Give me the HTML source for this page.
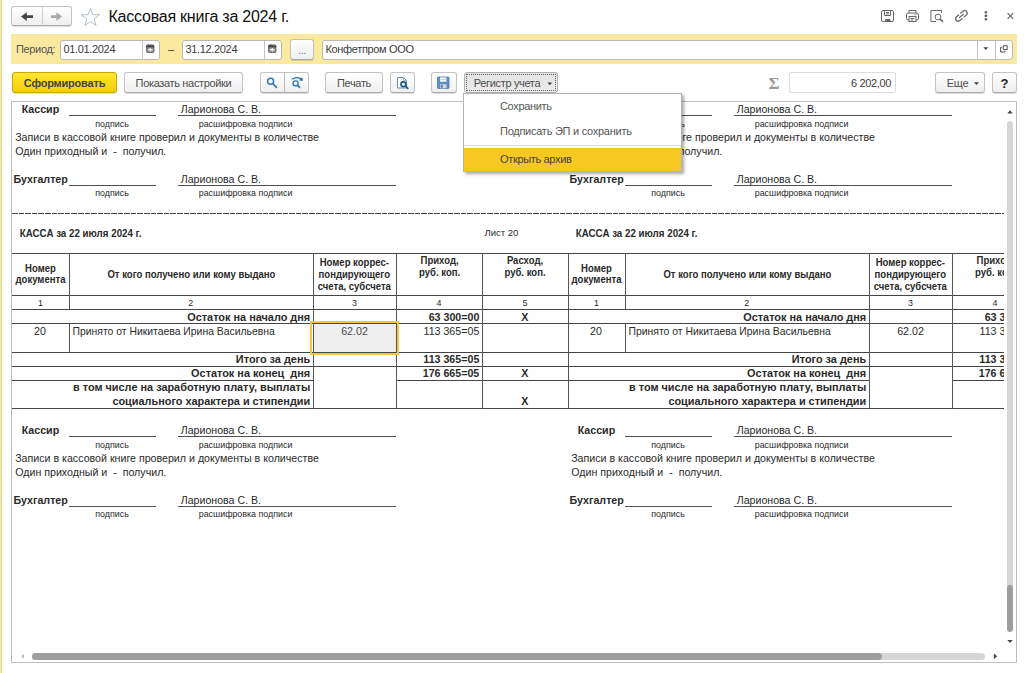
<!DOCTYPE html>
<html lang="ru"><head><meta charset="utf-8"><title>Кассовая книга за 2024 г.</title>
<style>
*{box-sizing:border-box;margin:0;padding:0}
html,body{width:1024px;height:673px;overflow:hidden;background:#fff}
body{position:relative;font-family:"Liberation Sans",Arial,sans-serif;font-size:11px;color:#333}
.abs{position:absolute}
.lstrip{left:0;top:0;width:1px;height:673px;background:#f4e591}
.lstrip2{left:1px;top:0;width:1px;height:673px;background:#e2d8aa}
.ui{font-size:11px;letter-spacing:-0.34px;white-space:nowrap}
.btn{position:absolute;height:21px;top:72px;border:1px solid #c3c3c3;border-bottom-color:#a9a9a9;border-radius:3px;background:linear-gradient(#ffffff,#efefef);box-shadow:0 1px 0 rgba(0,0,0,.12);text-align:center;line-height:21px;font-size:11px;letter-spacing:-0.34px;color:#4d4d4d;white-space:nowrap}
.inp{position:absolute;top:40px;height:20px;border:1px solid #b9b9b9;border-radius:3px;background:#fff;line-height:17px;font-size:11px;letter-spacing:-0.34px;color:#3c3c3c;padding-left:2.5px;white-space:nowrap}
.title{left:108.5px;top:5.7px;font-size:16px;letter-spacing:-0.23px;line-height:22px;color:#111;white-space:nowrap}
.ybar{left:11px;top:34px;width:1006px;height:30px;background:#fbe9a0}
/* document */
.panel{left:11px;top:101px;width:1006px;height:562px;border:1px solid #bdbdbd;background:#fff;overflow:hidden}
.view{position:absolute;left:0;top:0;width:992px;height:548px;overflow:hidden}
.pg{position:absolute;top:-102px;width:568px;height:673px;color:#2a2a2a}
.pg div{position:absolute;white-space:nowrap}
</style></head><body>
<div class="abs lstrip"></div><div class="abs lstrip2"></div>

<!-- header -->
<div class="btn" style="left:11px;top:6px;width:61px;height:20px"></div>
<div class="abs title">Кассовая книга за 2024 г.</div>

<div class="abs ybar"></div>
<div class="abs ui" style="left:16px;top:42px;line-height:14px;color:#555">Период:</div>
<div class="inp" style="left:60px;width:100px">01.01.2024</div>
<div class="abs ui" style="left:168px;top:42px;line-height:14px">–</div>
<div class="inp" style="left:182px;width:100px">31.12.2024</div>
<div class="btn" style="left:290px;top:39px;width:24px;height:21px;color:#777">...</div>
<div class="inp" style="left:322px;width:691px">Конфетпром ООО</div>

<!-- toolbar -->
<div class="btn" style="left:12px;width:105px;background:linear-gradient(#ffe630,#f5cf00);border-color:#c9a800;color:#444;font-weight:bold;letter-spacing:-0.2px">Сформировать</div>
<div class="btn" style="left:124px;width:119px">Показать настройки</div>
<div class="btn" style="left:260px;width:49px"></div>
<div class="btn" style="left:325px;width:58px">Печать</div>
<div class="btn" style="left:390px;width:25px"></div>
<div class="btn" style="left:431px;width:26px"></div>
<div class="btn" style="left:464px;width:94px;border-color:#b2b2b2;background:linear-gradient(#e2e2e2,#ececec);box-shadow:none"><span style="margin-right:8px">Регистр учета</span><div class="abs" style="left:1px;top:1px;width:90px;height:17px;border:1px dotted #666"></div></div>
<div class="abs" style="left:768.5px;top:73.5px;font-size:17px;line-height:20px;font-family:'Liberation Serif',serif;font-weight:bold;color:#9a9a9a">Σ</div>
<div class="inp" style="left:789px;top:72px;width:107px;height:21px;line-height:20px;border-color:#dcdcdc;border-radius:2px;text-align:right;padding-right:4px">6 202,00</div>
<div class="btn" style="left:935px;width:50px"><span style="margin-right:5px">Еще</span></div>
<div class="btn" style="left:992px;width:25px;color:#222;font-weight:bold;font-size:13px;letter-spacing:0">?</div>


<!-- icons layer -->
<svg class="abs" style="left:0;top:0" width="1024" height="100" viewBox="0 0 1024 100" fill="none">

 <!-- dividers -->
 <g stroke="#c4c4c4"><line x1="142.5" y1="41" x2="142.5" y2="59"/><line x1="264.5" y1="41" x2="264.5" y2="59"/><line x1="977.5" y1="41" x2="977.5" y2="59"/><line x1="995.5" y1="41" x2="995.5" y2="59"/><line x1="284.5" y1="73" x2="284.5" y2="93" stroke="#bcbcbc"/></g>
 <!-- back / forward -->
 <line x1="42.5" y1="7" x2="42.5" y2="26" stroke="#d0d0d0"/>
 <path d="M21 16.6 L26.8 12.3 L26.8 15.2 L33 15.2 L33 18.1 L26.8 18.1 L26.8 20.9 Z" fill="#444"/>
 <path d="M62.2 16.6 L56.4 12.3 L56.4 15.2 L51 15.2 L51 18.1 L56.4 18.1 L56.4 20.9 Z" fill="#aaa"/>
 <!-- star -->
 <path d="M90.4 8.2 L92.7 14.6 L99.5 14.8 L94.1 18.9 L96 25.4 L90.4 21.6 L84.8 25.4 L86.7 18.9 L81.3 14.8 L88.1 14.6 Z" stroke="#b5bdc7" stroke-width="1" stroke-linejoin="miter"/>
 <!-- calendars -->
 <g>
  <rect x="146.5" y="45" width="7.5" height="7.5" rx="1" fill="#8a8a8a" stroke="#5a5a5a" stroke-width=".8"/>
  <rect x="146.5" y="45" width="7.5" height="2.3" fill="#444"/>
  <rect x="147.8" y="44" width="1.3" height="1.8" fill="#777"/><rect x="151.2" y="44" width="1.6" height="1.8" fill="#999"/>
  <rect x="148" y="49" width="4.6" height="1.4" fill="#f4f4f4"/>
  <rect x="149.7" y="47.9" width="1.2" height="3.7" fill="#f4f4f4"/>
 </g>
 <g transform="translate(122 0)">
  <rect x="146.5" y="45" width="7.5" height="7.5" rx="1" fill="#8a8a8a" stroke="#5a5a5a" stroke-width=".8"/>
  <rect x="146.5" y="45" width="7.5" height="2.3" fill="#444"/>
  <rect x="147.8" y="44" width="1.3" height="1.8" fill="#777"/><rect x="151.2" y="44" width="1.6" height="1.8" fill="#999"/>
  <rect x="148" y="49" width="4.6" height="1.4" fill="#f4f4f4"/>
  <rect x="149.7" y="47.9" width="1.2" height="3.7" fill="#f4f4f4"/>
 </g>
 <!-- combobox arrow + open -->
 <path d="M983.3 47.3 L988.3 47.3 L985.8 50 Z" fill="#444"/>
 <path d="M1003.2 45.7 H1007.2 V49.5 H1003.2 Z" stroke="#555" stroke-width="1"/>
 <path d="M1002 47.6 H1000.6 V52 H1005 V50.6" stroke="#555" stroke-width="1"/>
 <!-- search buttons -->
 <circle cx="270.6" cy="81.3" r="3" stroke="#2e7ab3" stroke-width="1.5"/>
 <path d="M272.9 83.7 L276.4 87.3" stroke="#2e7ab3" stroke-width="1.7" stroke-linecap="round"/>
 <circle cx="295.6" cy="83.4" r="2.5" stroke="#2e7ab3" stroke-width="1.4"/>
 <path d="M297.5 85.4 L299.6 87.4" stroke="#2e7ab3" stroke-width="1.6" stroke-linecap="round"/>
 <path d="M291.8 79.3 Q296.5 76.2 301 78.8" stroke="#2473ad" stroke-width="1.3"/>
 <path d="M302.6 77.2 L302.6 81 L298.8 80.3 Z" fill="#1f6aa5"/>
 <!-- preview button icon -->
 <path d="M397.5 77.5 H403.5 L406.5 80.5 V88 H397.5 Z" fill="#fff" stroke="#6c8aa5" stroke-width="1"/>
 <path d="M403.5 77.5 V80.5 H406.5" stroke="#9aaec0" stroke-width=".8"/>
 <circle cx="403.4" cy="84.2" r="2.4" fill="#fff" stroke="#1d5b88" stroke-width="1.7"/>
 <path d="M405.4 86.2 L407.8 88.4" stroke="#1d5b88" stroke-width="1.8" stroke-linecap="round"/>
 <!-- save button icon (blue floppy) -->
 <rect x="437.5" y="77" width="11.5" height="11.5" rx=".8" fill="#5f8fca" stroke="#4a79b5" stroke-width=".8"/>
 <rect x="440" y="77.4" width="6.4" height="4.4" fill="#f2f5fa"/>
 <rect x="440.5" y="79" width="5.4" height=".7" fill="#b6c6dc"/>
 <rect x="440.3" y="84.3" width="6.2" height="4" fill="#d9d9d2"/>
 <rect x="441.2" y="85" width="1.5" height="2.8" fill="#4a6f9f"/>
 <!-- top right icons -->
 <g stroke="#6a6a6a" stroke-width="1">
  <rect x="881.5" y="10.5" width="12" height="11" rx="1.5"/>
  <path d="M884.5 10.5 V15.5 H890.5 V10.5 M886 12.5 H889 M886 14 H889"/>
  <path d="M885.5 21.5 V19.5 H890 V21.5" />
  <rect x="886.5" y="19.8" width="3" height="1.7" fill="#555" stroke="none"/>
  <!-- printer -->
  <path d="M909 13 V10.5 H916 V13"/>
  <rect x="906.5" y="13" width="12" height="7" rx="1.8"/>
  <rect x="909" y="16.5" width="7" height="5" fill="#fff"/>
  <path d="M910.5 18.5 H914.5 M910.5 20 H913"/>
  <path d="M914.5 14.7 H915.5 M916.5 14.7 H917.3" stroke-width="1"/>
  <!-- preview -->
  <path d="M941.5 13 V10.5 H930.9 V21.5 H936"/>
  <circle cx="938" cy="17" r="2.9"/>
  <path d="M940.2 19.2 L942.6 21.4" stroke-width="1.6" stroke-linecap="round"/>
  <!-- link -->
  <g transform="translate(961.4 15.9) rotate(-41)" stroke-width="1.3" stroke-linecap="round">
   <path d="M-1.4 -2.5 H-4.3 A2.5 2.5 0 0 0 -4.3 2.5 H-1.4"/>
   <path d="M1.4 -2.5 H4.3 A2.5 2.5 0 0 1 4.3 2.5 H1.4"/>
   <path d="M-2.5 0 H2.5"/>
  </g>
 </g>
 <g fill="#5a5a5a"><rect x="984.7" y="11.2" width="2.4" height="2.2"/><rect x="984.7" y="14.7" width="2.4" height="2.2"/><rect x="984.7" y="18.2" width="2.4" height="2.2"/></g>
 <path d="M1007.6 13.2 L1013.2 18.8 M1013.2 13.2 L1007.6 18.8" stroke="#666" stroke-width="1.1"/>
 <!-- button arrows -->
 <path d="M547.3 82.5 L552.3 82.5 L549.8 85.2 Z" fill="#444"/>
 <path d="M974 82.2 L979 82.2 L976.5 84.9 Z" fill="#444"/>
</svg>

<!-- document panel -->
<div class="abs panel">
<div class="view">
<div class="pg" style="left:-12px"><div style="top:102.00px;font-size:10.67px;line-height:14px;left:21.70px;font-weight:bold;">Кассир</div>
<div style="left:69px;top:115px;width:87px;height:1px;background:#505050"></div>
<div style="top:102.00px;font-size:10.62px;line-height:14px;left:180.75px;">Ларионова С. В.</div>
<div style="left:178px;top:115px;width:218px;height:1px;background:#505050"></div>
<div style="top:117.60px;font-size:8.9px;line-height:12px;left:95.30px;">подпись</div>
<div style="top:117.60px;font-size:8.9px;line-height:12px;left:198.75px;">расшифровка подписи</div>
<div style="top:129.60px;font-size:10.65px;line-height:14px;left:15.20px;">Записи в кассовой книге проверил и документы в количестве</div>
<div style="top:143.60px;font-size:10.65px;line-height:14px;left:15.20px;">Один приходный и&nbsp; -&nbsp; получил.</div>
<div style="top:172.00px;font-size:10.67px;line-height:14px;left:13.50px;font-weight:bold;">Бухгалтер</div>
<div style="left:69px;top:185px;width:87px;height:1px;background:#505050"></div>
<div style="top:171.70px;font-size:10.62px;line-height:14px;left:180.75px;">Ларионова С. В.</div>
<div style="left:178px;top:185px;width:218px;height:1px;background:#505050"></div>
<div style="top:187.00px;font-size:8.9px;line-height:12px;left:95.30px;">подпись</div>
<div style="top:187.00px;font-size:8.9px;line-height:12px;left:198.75px;">расшифровка подписи</div>
<div style="top:226.80px;font-size:9.75px;line-height:13px;left:19.80px;font-weight:bold;transform:scaleY(1.12);transform-origin:0 10.0px;">КАССА за 22 июля 2024 г.</div>
<div style="top:227.00px;font-size:9.5px;line-height:12px;left:484.50px;">Лист 20</div>
<div style="left:313px;top:323px;width:84px;height:30px;background:#efefef"></div>
<div style="left:12px;top:253px;width:556px;height:1px;background:#444"></div>
<div style="left:12px;top:295px;width:556px;height:1px;background:#444"></div>
<div style="left:12px;top:309px;width:556px;height:1px;background:#444"></div>
<div style="left:12px;top:323px;width:556px;height:1px;background:#444"></div>
<div style="left:12px;top:352px;width:556px;height:1px;background:#444"></div>
<div style="left:12px;top:366px;width:556px;height:1px;background:#444"></div>
<div style="left:12px;top:408px;width:556px;height:1px;background:#444"></div>
<div style="left:12px;top:380px;width:301px;height:1px;background:#444"></div>
<div style="left:396px;top:380px;width:172px;height:1px;background:#444"></div>
<div style="left:69px;top:253px;width:1px;height:57px;background:#555"></div>
<div style="left:69px;top:323px;width:1px;height:30px;background:#555"></div>
<div style="left:313px;top:253px;width:1px;height:156px;background:#555"></div>
<div style="left:396px;top:253px;width:1px;height:156px;background:#555"></div>
<div style="left:482px;top:253px;width:1px;height:156px;background:#555"></div>
<div style="left:568px;top:253px;width:1px;height:156px;background:#555"></div>
<div style="left:310px;top:321px;width:89px;height:34px;border:2px solid #f7c92e;border-radius:1px"></div>
<div style="top:262.50px;font-size:9.55px;line-height:12px;left:-109.50px;width:300px;text-align:center;font-weight:bold;transform:scaleY(1.06);transform-origin:0 9.5px;">Номер</div>
<div style="top:274.25px;font-size:9.55px;line-height:12px;left:-109.50px;width:300px;text-align:center;font-weight:bold;transform:scaleY(1.06);transform-origin:0 9.5px;">документа</div>
<div style="top:268.75px;font-size:9.55px;line-height:12px;left:41.40px;width:300px;text-align:center;font-weight:bold;transform:scaleY(1.06);transform-origin:0 9.5px;">От кого получено или кому выдано</div>
<div style="top:256.50px;font-size:9.55px;line-height:12px;left:204.30px;width:300px;text-align:center;font-weight:bold;transform:scaleY(1.06);transform-origin:0 9.5px;">Номер коррес-</div>
<div style="top:268.50px;font-size:9.55px;line-height:12px;left:204.30px;width:300px;text-align:center;font-weight:bold;transform:scaleY(1.06);transform-origin:0 9.5px;">пондирующего</div>
<div style="top:280.50px;font-size:9.55px;line-height:12px;left:204.30px;width:300px;text-align:center;font-weight:bold;transform:scaleY(1.06);transform-origin:0 9.5px;">счета, субсчета</div>
<div style="top:254.50px;font-size:9.55px;line-height:12px;left:289.60px;width:300px;text-align:center;font-weight:bold;transform:scaleY(1.06);transform-origin:0 9.5px;">Приход,</div>
<div style="top:266.50px;font-size:9.55px;line-height:12px;left:289.60px;width:300px;text-align:center;font-weight:bold;transform:scaleY(1.06);transform-origin:0 9.5px;">руб. коп.</div>
<div style="top:254.50px;font-size:9.55px;line-height:12px;left:375.00px;width:300px;text-align:center;font-weight:bold;transform:scaleY(1.06);transform-origin:0 9.5px;">Расход,</div>
<div style="top:266.50px;font-size:9.55px;line-height:12px;left:375.00px;width:300px;text-align:center;font-weight:bold;transform:scaleY(1.06);transform-origin:0 9.5px;">руб. коп.</div>
<div style="top:296.60px;font-size:8.9px;line-height:12px;left:-109.50px;width:300px;text-align:center;">1</div>
<div style="top:296.60px;font-size:8.9px;line-height:12px;left:40.70px;width:300px;text-align:center;">2</div>
<div style="top:296.60px;font-size:8.9px;line-height:12px;left:204.50px;width:300px;text-align:center;">3</div>
<div style="top:296.60px;font-size:8.9px;line-height:12px;left:288.90px;width:300px;text-align:center;">4</div>
<div style="top:296.60px;font-size:8.9px;line-height:12px;left:375.00px;width:300px;text-align:center;">5</div>
<div style="top:309.75px;font-size:10.9px;line-height:14px;right:257.80px;font-weight:bold;">Остаток на начало дня</div>
<div style="top:309.75px;font-size:10.67px;line-height:14px;right:88.70px;font-weight:bold;">63 300=00</div>
<div style="top:309.75px;font-size:10.67px;line-height:14px;left:374.70px;width:300px;text-align:center;font-weight:bold;">Х</div>
<div style="top:324.00px;font-size:10.67px;line-height:14px;left:-110.00px;width:300px;text-align:center;">20</div>
<div style="top:324.50px;font-size:10.4px;line-height:14px;left:72.50px;">Принято от Никитаева Ирина Васильевна</div>
<div style="top:323.75px;font-size:10.67px;line-height:14px;left:204.50px;width:300px;text-align:center;color:#4a4a4a;">62.02</div>
<div style="top:323.60px;font-size:10.67px;line-height:14px;right:88.70px;">113 365=05</div>
<div style="top:352.00px;font-size:10.9px;line-height:14px;right:257.80px;font-weight:bold;">Итого за день</div>
<div style="top:352.00px;font-size:10.67px;line-height:14px;right:88.70px;font-weight:bold;">113 365=05</div>
<div style="top:365.75px;font-size:10.9px;line-height:14px;right:257.80px;font-weight:bold;">Остаток на конец&nbsp; дня</div>
<div style="top:365.75px;font-size:10.67px;line-height:14px;right:88.70px;font-weight:bold;">176 665=05</div>
<div style="top:365.75px;font-size:10.67px;line-height:14px;left:374.70px;width:300px;text-align:center;font-weight:bold;">Х</div>
<div style="top:380.25px;font-size:10.9px;line-height:14px;right:257.80px;font-weight:bold;">в том числе на заработную плату, выплаты</div>
<div style="top:393.50px;font-size:10.9px;line-height:14px;right:257.80px;font-weight:bold;">социального характера и стипендии</div>
<div style="top:394.00px;font-size:10.67px;line-height:14px;left:374.70px;width:300px;text-align:center;font-weight:bold;">Х</div>
<div style="top:423.00px;font-size:10.67px;line-height:14px;left:21.70px;font-weight:bold;">Кассир</div>
<div style="left:69px;top:436px;width:87px;height:1px;background:#505050"></div>
<div style="top:423.00px;font-size:10.62px;line-height:14px;left:180.75px;">Ларионова С. В.</div>
<div style="left:178px;top:436px;width:218px;height:1px;background:#505050"></div>
<div style="top:438.60px;font-size:8.9px;line-height:12px;left:95.30px;">подпись</div>
<div style="top:438.60px;font-size:8.9px;line-height:12px;left:198.75px;">расшифровка подписи</div>
<div style="top:450.60px;font-size:10.65px;line-height:14px;left:15.20px;">Записи в кассовой книге проверил и документы в количестве</div>
<div style="top:464.60px;font-size:10.65px;line-height:14px;left:15.20px;">Один приходный и&nbsp; -&nbsp; получил.</div>
<div style="top:493.00px;font-size:10.67px;line-height:14px;left:13.50px;font-weight:bold;">Бухгалтер</div>
<div style="left:69px;top:506px;width:87px;height:1px;background:#505050"></div>
<div style="top:492.70px;font-size:10.62px;line-height:14px;left:180.75px;">Ларионова С. В.</div>
<div style="left:178px;top:506px;width:218px;height:1px;background:#505050"></div>
<div style="top:508.00px;font-size:8.9px;line-height:12px;left:95.30px;">подпись</div>
<div style="top:508.00px;font-size:8.9px;line-height:12px;left:198.75px;">расшифровка подписи</div></div>
<div class="pg" style="left:544px"><div style="top:102.00px;font-size:10.67px;line-height:14px;left:21.70px;font-weight:bold;">Кассир</div>
<div style="left:69px;top:115px;width:87px;height:1px;background:#505050"></div>
<div style="top:102.00px;font-size:10.62px;line-height:14px;left:180.75px;">Ларионова С. В.</div>
<div style="left:178px;top:115px;width:218px;height:1px;background:#505050"></div>
<div style="top:117.60px;font-size:8.9px;line-height:12px;left:95.30px;">подпись</div>
<div style="top:117.60px;font-size:8.9px;line-height:12px;left:198.75px;">расшифровка подписи</div>
<div style="top:129.60px;font-size:10.65px;line-height:14px;left:15.20px;">Записи в кассовой книге проверил и документы в количестве</div>
<div style="top:143.60px;font-size:10.65px;line-height:14px;left:15.20px;">Один приходный и&nbsp; -&nbsp; получил.</div>
<div style="top:172.00px;font-size:10.67px;line-height:14px;left:13.50px;font-weight:bold;">Бухгалтер</div>
<div style="left:69px;top:185px;width:87px;height:1px;background:#505050"></div>
<div style="top:171.70px;font-size:10.62px;line-height:14px;left:180.75px;">Ларионова С. В.</div>
<div style="left:178px;top:185px;width:218px;height:1px;background:#505050"></div>
<div style="top:187.00px;font-size:8.9px;line-height:12px;left:95.30px;">подпись</div>
<div style="top:187.00px;font-size:8.9px;line-height:12px;left:198.75px;">расшифровка подписи</div>
<div style="top:226.80px;font-size:9.75px;line-height:13px;left:19.80px;font-weight:bold;transform:scaleY(1.12);transform-origin:0 10.0px;">КАССА за 22 июля 2024 г.</div>
<div style="left:12px;top:253px;width:556px;height:1px;background:#444"></div>
<div style="left:12px;top:295px;width:556px;height:1px;background:#444"></div>
<div style="left:12px;top:309px;width:556px;height:1px;background:#444"></div>
<div style="left:12px;top:323px;width:556px;height:1px;background:#444"></div>
<div style="left:12px;top:352px;width:556px;height:1px;background:#444"></div>
<div style="left:12px;top:366px;width:556px;height:1px;background:#444"></div>
<div style="left:12px;top:408px;width:556px;height:1px;background:#444"></div>
<div style="left:12px;top:380px;width:301px;height:1px;background:#444"></div>
<div style="left:396px;top:380px;width:172px;height:1px;background:#444"></div>
<div style="left:69px;top:253px;width:1px;height:57px;background:#555"></div>
<div style="left:69px;top:323px;width:1px;height:30px;background:#555"></div>
<div style="left:313px;top:253px;width:1px;height:156px;background:#555"></div>
<div style="left:396px;top:253px;width:1px;height:156px;background:#555"></div>
<div style="left:482px;top:253px;width:1px;height:156px;background:#555"></div>
<div style="left:568px;top:253px;width:1px;height:156px;background:#555"></div>
<div style="top:262.50px;font-size:9.55px;line-height:12px;left:-109.50px;width:300px;text-align:center;font-weight:bold;transform:scaleY(1.06);transform-origin:0 9.5px;">Номер</div>
<div style="top:274.25px;font-size:9.55px;line-height:12px;left:-109.50px;width:300px;text-align:center;font-weight:bold;transform:scaleY(1.06);transform-origin:0 9.5px;">документа</div>
<div style="top:268.75px;font-size:9.55px;line-height:12px;left:41.40px;width:300px;text-align:center;font-weight:bold;transform:scaleY(1.06);transform-origin:0 9.5px;">От кого получено или кому выдано</div>
<div style="top:256.50px;font-size:9.55px;line-height:12px;left:204.30px;width:300px;text-align:center;font-weight:bold;transform:scaleY(1.06);transform-origin:0 9.5px;">Номер коррес-</div>
<div style="top:268.50px;font-size:9.55px;line-height:12px;left:204.30px;width:300px;text-align:center;font-weight:bold;transform:scaleY(1.06);transform-origin:0 9.5px;">пондирующего</div>
<div style="top:280.50px;font-size:9.55px;line-height:12px;left:204.30px;width:300px;text-align:center;font-weight:bold;transform:scaleY(1.06);transform-origin:0 9.5px;">счета, субсчета</div>
<div style="top:254.50px;font-size:9.55px;line-height:12px;left:289.60px;width:300px;text-align:center;font-weight:bold;transform:scaleY(1.06);transform-origin:0 9.5px;">Приход,</div>
<div style="top:266.50px;font-size:9.55px;line-height:12px;left:289.60px;width:300px;text-align:center;font-weight:bold;transform:scaleY(1.06);transform-origin:0 9.5px;">руб. коп.</div>
<div style="top:254.50px;font-size:9.55px;line-height:12px;left:375.00px;width:300px;text-align:center;font-weight:bold;transform:scaleY(1.06);transform-origin:0 9.5px;">Расход,</div>
<div style="top:266.50px;font-size:9.55px;line-height:12px;left:375.00px;width:300px;text-align:center;font-weight:bold;transform:scaleY(1.06);transform-origin:0 9.5px;">руб. коп.</div>
<div style="top:296.60px;font-size:8.9px;line-height:12px;left:-109.50px;width:300px;text-align:center;">1</div>
<div style="top:296.60px;font-size:8.9px;line-height:12px;left:40.70px;width:300px;text-align:center;">2</div>
<div style="top:296.60px;font-size:8.9px;line-height:12px;left:204.50px;width:300px;text-align:center;">3</div>
<div style="top:296.60px;font-size:8.9px;line-height:12px;left:288.90px;width:300px;text-align:center;">4</div>
<div style="top:296.60px;font-size:8.9px;line-height:12px;left:375.00px;width:300px;text-align:center;">5</div>
<div style="top:309.75px;font-size:10.9px;line-height:14px;right:257.80px;font-weight:bold;">Остаток на начало дня</div>
<div style="top:309.75px;font-size:10.67px;line-height:14px;right:88.70px;font-weight:bold;">63 300=00</div>
<div style="top:309.75px;font-size:10.67px;line-height:14px;left:374.70px;width:300px;text-align:center;font-weight:bold;">Х</div>
<div style="top:324.00px;font-size:10.67px;line-height:14px;left:-110.00px;width:300px;text-align:center;">20</div>
<div style="top:324.50px;font-size:10.4px;line-height:14px;left:72.50px;">Принято от Никитаева Ирина Васильевна</div>
<div style="top:323.75px;font-size:10.67px;line-height:14px;left:204.50px;width:300px;text-align:center;">62.02</div>
<div style="top:323.60px;font-size:10.67px;line-height:14px;right:88.70px;">113 365=05</div>
<div style="top:352.00px;font-size:10.9px;line-height:14px;right:257.80px;font-weight:bold;">Итого за день</div>
<div style="top:352.00px;font-size:10.67px;line-height:14px;right:88.70px;font-weight:bold;">113 365=05</div>
<div style="top:365.75px;font-size:10.9px;line-height:14px;right:257.80px;font-weight:bold;">Остаток на конец&nbsp; дня</div>
<div style="top:365.75px;font-size:10.67px;line-height:14px;right:88.70px;font-weight:bold;">176 665=05</div>
<div style="top:365.75px;font-size:10.67px;line-height:14px;left:374.70px;width:300px;text-align:center;font-weight:bold;">Х</div>
<div style="top:380.25px;font-size:10.9px;line-height:14px;right:257.80px;font-weight:bold;">в том числе на заработную плату, выплаты</div>
<div style="top:393.50px;font-size:10.9px;line-height:14px;right:257.80px;font-weight:bold;">социального характера и стипендии</div>
<div style="top:394.00px;font-size:10.67px;line-height:14px;left:374.70px;width:300px;text-align:center;font-weight:bold;">Х</div>
<div style="top:423.00px;font-size:10.67px;line-height:14px;left:21.70px;font-weight:bold;">Кассир</div>
<div style="left:69px;top:436px;width:87px;height:1px;background:#505050"></div>
<div style="top:423.00px;font-size:10.62px;line-height:14px;left:180.75px;">Ларионова С. В.</div>
<div style="left:178px;top:436px;width:218px;height:1px;background:#505050"></div>
<div style="top:438.60px;font-size:8.9px;line-height:12px;left:95.30px;">подпись</div>
<div style="top:438.60px;font-size:8.9px;line-height:12px;left:198.75px;">расшифровка подписи</div>
<div style="top:450.60px;font-size:10.65px;line-height:14px;left:15.20px;">Записи в кассовой книге проверил и документы в количестве</div>
<div style="top:464.60px;font-size:10.65px;line-height:14px;left:15.20px;">Один приходный и&nbsp; -&nbsp; получил.</div>
<div style="top:493.00px;font-size:10.67px;line-height:14px;left:13.50px;font-weight:bold;">Бухгалтер</div>
<div style="left:69px;top:506px;width:87px;height:1px;background:#505050"></div>
<div style="top:492.70px;font-size:10.62px;line-height:14px;left:180.75px;">Ларионова С. В.</div>
<div style="left:178px;top:506px;width:218px;height:1px;background:#505050"></div>
<div style="top:508.00px;font-size:8.9px;line-height:12px;left:95.30px;">подпись</div>
<div style="top:508.00px;font-size:8.9px;line-height:12px;left:198.75px;">расшифровка подписи</div></div>
<div class="abs" style="left:0;top:111px;width:992px;height:1px;background:repeating-linear-gradient(90deg,#444 0,#444 5.6px,transparent 5.6px,transparent 6.6px)"></div>
</div>
<div class="abs" style="left:995px;top:19px;width:6px;height:468px;border-radius:3px;background:#d6d6d6"></div>
<div class="abs" style="left:995px;top:483px;width:6px;height:47px;border-radius:3px;background:#9e9e9e"></div>
<div class="abs" style="left:20px;top:551px;width:953px;height:7px;border-radius:3.5px;background:#d6d6d6"></div>
<div class="abs" style="left:20px;top:551px;width:850px;height:7px;border-radius:3.5px;background:#9e9e9e"></div>
<svg class="abs" style="left:0;top:0" width="1004" height="560" viewBox="0 0 1004 560">
 <path d="M995.3 11.5 L1000.7 11.5 L998 8.3 Z" fill="#444"/>
 <path d="M995.3 538 L1000.7 538 L998 541 Z" fill="#444"/>
 <path d="M981.8 551.6 L981.8 557 L985.2 554.3 Z" fill="#444"/>
 <path d="M12 551.8 L12 556.8 L9.4 554.3 Z" fill="#bbb"/>
</svg>
</div>

<!-- dropdown -->
<div class="abs" style="left:463px;top:93px;width:219px;height:79px;background:#fff;border:1px solid #b5b5b5;box-shadow:2px 2px 3px rgba(0,0,0,.35)">
 <div class="abs ui" style="left:36px;top:4.6px;line-height:14px;color:#555">Сохранить</div>
 <div class="abs ui" style="left:36px;top:30px;line-height:14px;color:#555;letter-spacing:-0.26px">Подписать ЭП и сохранить</div>
 <div class="abs" style="left:0;top:51px;width:217px;height:1px;background:#d8d8d8"></div>
 <div class="abs" style="left:0;top:54px;width:217px;height:23px;background:#f7c821"></div>
 <div class="abs ui" style="left:36px;top:58.1px;line-height:14px;color:#444">Открыть архив</div>
</div>
</body></html>
